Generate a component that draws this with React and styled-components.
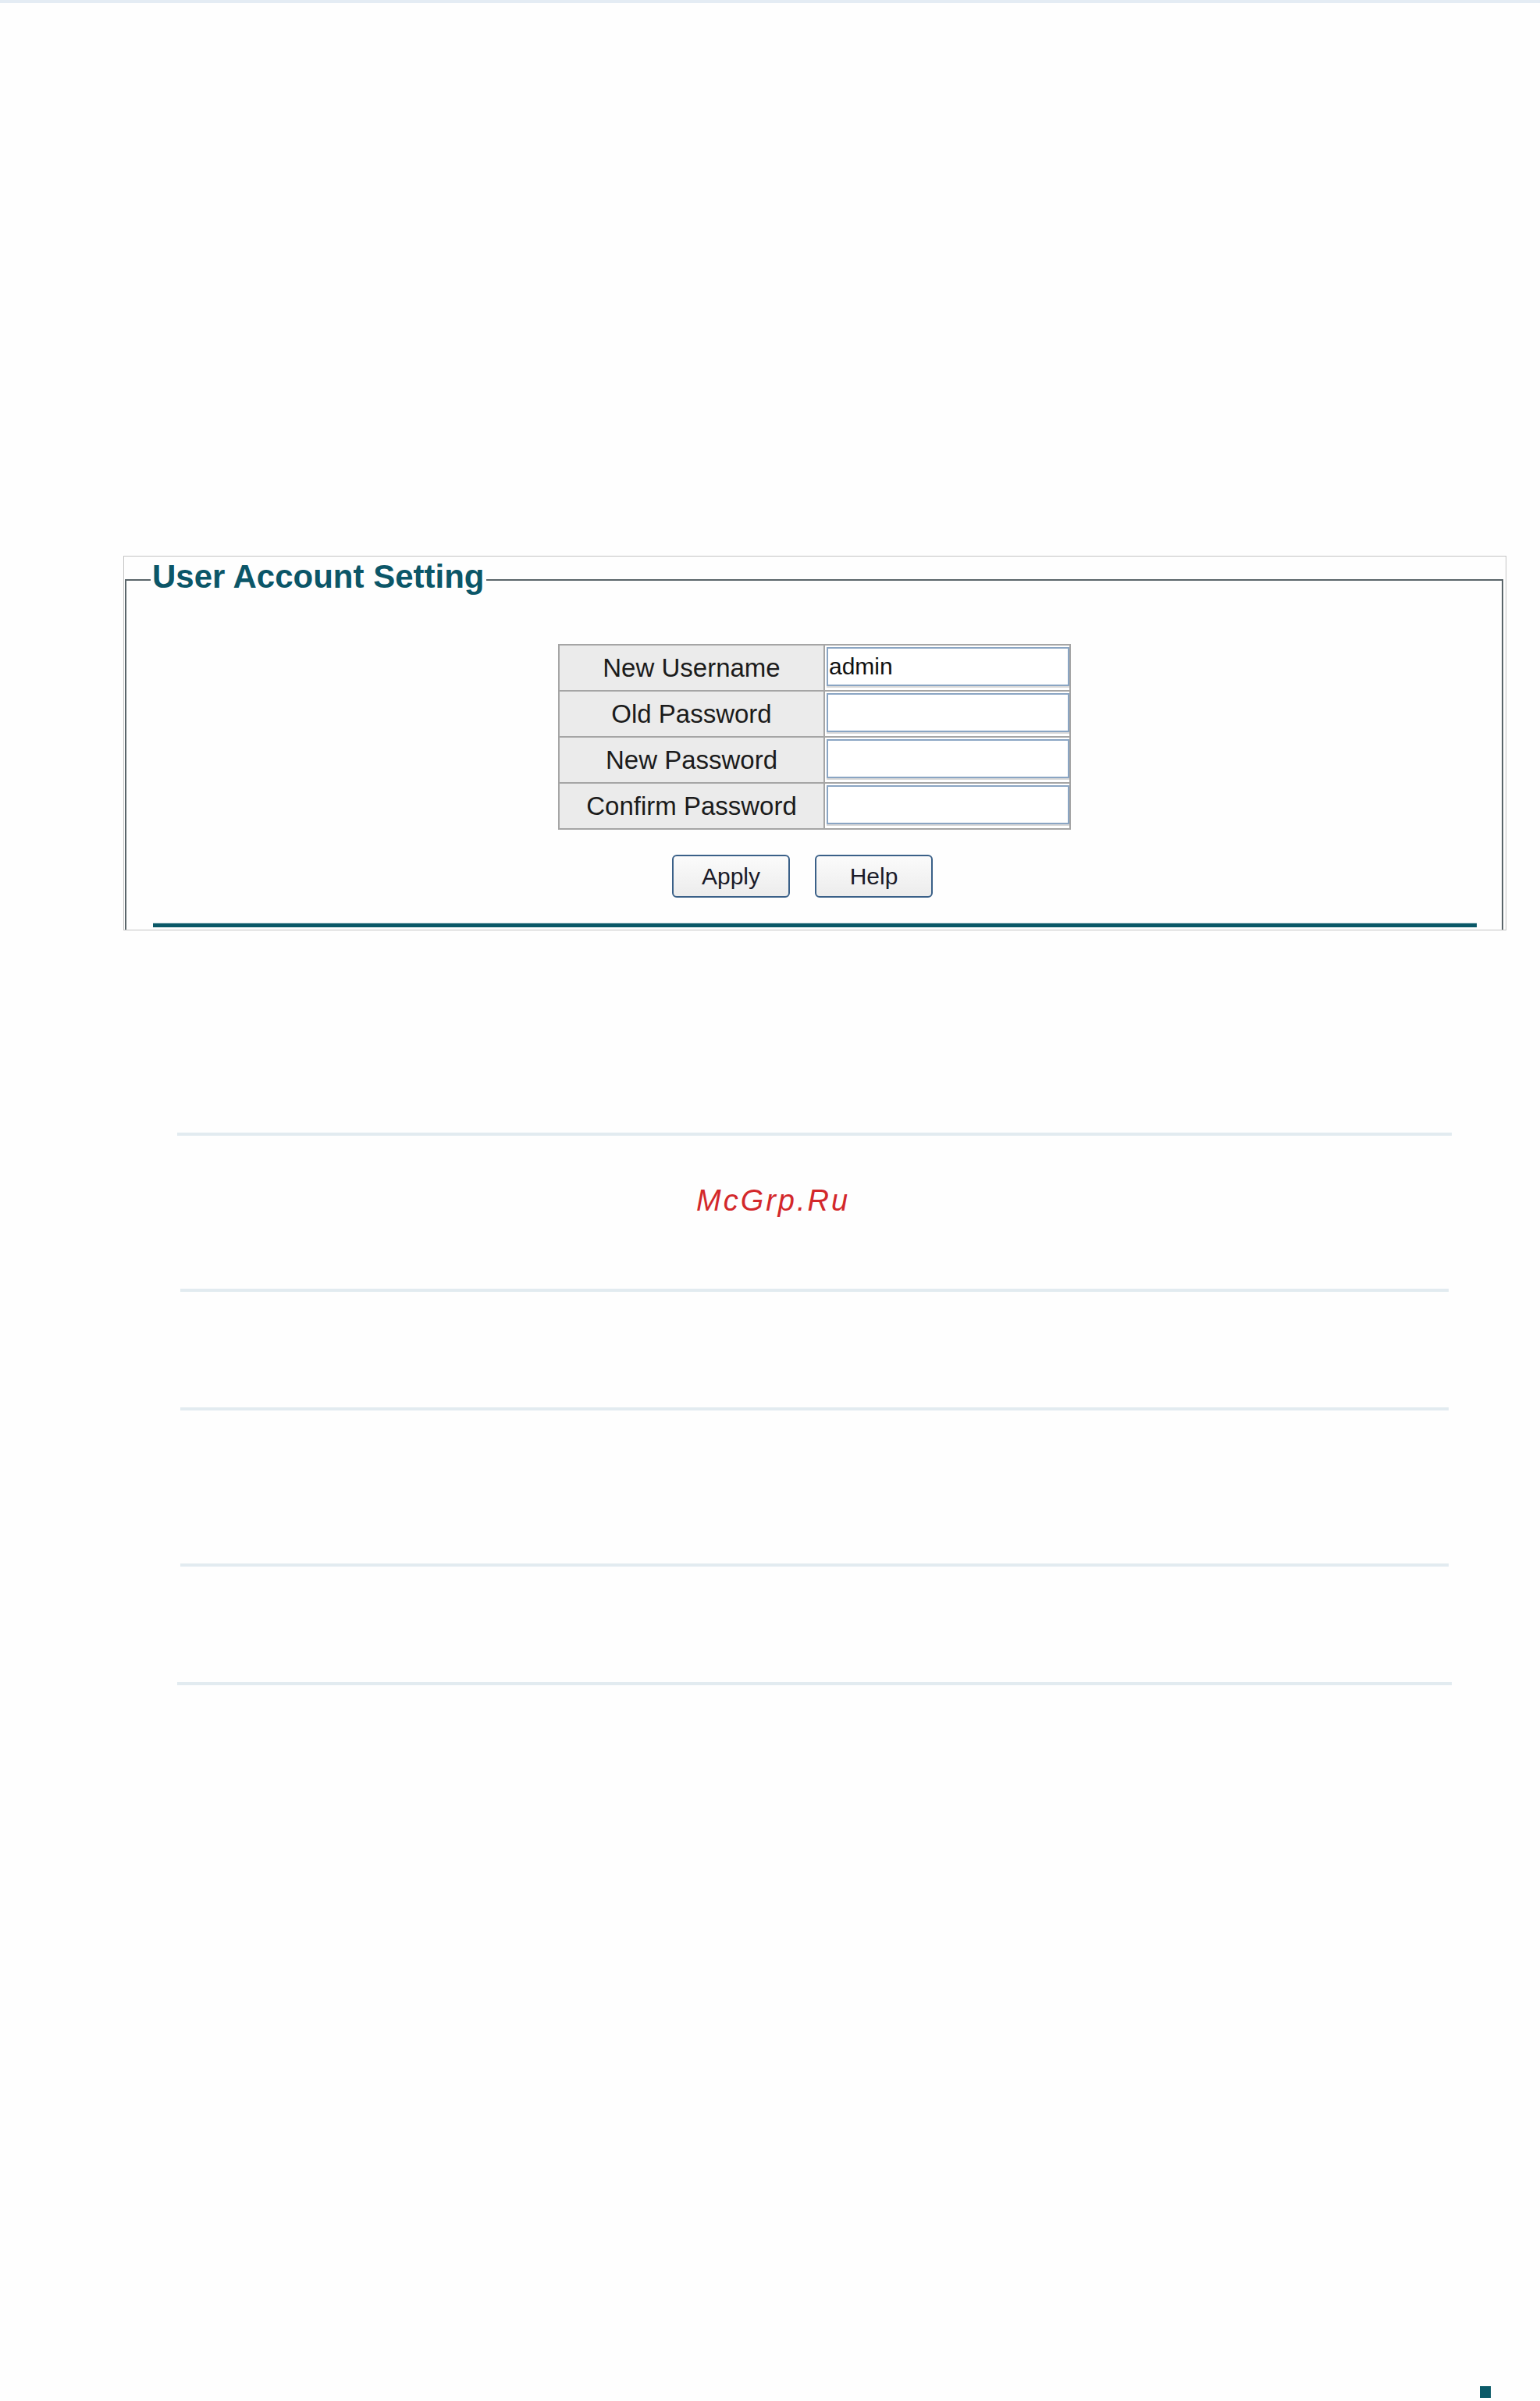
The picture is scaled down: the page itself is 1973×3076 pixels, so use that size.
import React from "react";
import styled, { createGlobalStyle } from "styled-components";

const GlobalStyle = createGlobalStyle`
  html, body {
    margin: 0;
    padding: 0;
    background: #fefefe;
  }
  body {
    font-family: "Liberation Sans", Arial, sans-serif;
  }
  * {
    box-sizing: border-box;
  }
`;

const fields = [
  { label: "New Username", value: "admin", type: "text" },
  { label: "Old Password", value: "", type: "password" },
  { label: "New Password", value: "", type: "password" },
  { label: "Confirm Password", value: "", type: "password" },
];

export default function App() {
  return (
    <>
      <GlobalStyle />
      <Page>
        <TopStrip />
        <Panel>
          <Frame>
            <Legend>User Account Setting</Legend>
            <FormTable>
              {fields.map((f) => (
                <FormRow key={f.label}>
                  <LabelCell>{f.label}</LabelCell>
                  <InputCell>
                    <TextInput type={f.type} defaultValue={f.value} />
                  </InputCell>
                </FormRow>
              ))}
            </FormTable>
            <ButtonRow>
              <Button type="button">Apply</Button>
              <Button type="button">Help</Button>
            </ButtonRow>
            <TealBar />
          </Frame>
        </Panel>

        <Lower>
          <Rule $inset={0} />
          <Watermark>McGrp.Ru</Watermark>
          <Rule $inset={4} />
          <Rule $inset={4} $gap={148} />
          <Rule $inset={4} $gap={196} />
          <Rule $inset={0} $gap={148} />
        </Lower>

        <PageMark />
      </Page>
    </>
  );
}

const Page = styled.div`
  min-height: 3076px;
  display: flex;
  flex-direction: column;
`;

const TopStrip = styled.div`
  height: 4px;
  background: #e4ecf4;
`;

const Panel = styled.div`
  margin: 708px 0 0 158px;
  width: 1772px;
  height: 480px;
  border: 1px solid #c4c4c4;
  overflow: hidden;
`;

const Frame = styled.fieldset`
  margin: 6px 3px 0 1px;
  padding: 0 0 40px 0;
  border: 2px solid #5a656a;
  min-width: 0;
`;

const Legend = styled.legend`
  margin-left: 31px;
  padding: 0 2px 8px 2px;
  font-family: "Liberation Sans", Arial, sans-serif;
  font-weight: bold;
  font-size: 42px;
  line-height: 40px;
  color: #0b5668;
`;

const FormTable = styled.div`
  margin: 58px 0 0 553px;
  width: 657px;
  border-top: 2px solid #a5a5a5;
  border-left: 2px solid #a5a5a5;
`;

const FormRow = styled.div`
  display: grid;
  grid-template-columns: 340px 315px;
  height: 59px;
`;

const LabelCell = styled.div`
  display: flex;
  align-items: center;
  justify-content: center;
  background: #ebebeb;
  border-right: 2px solid #a5a5a5;
  border-bottom: 2px solid #a5a5a5;
  font-family: "Liberation Sans", Arial, sans-serif;
  font-size: 33px;
  color: #1b1b1b;
  white-space: nowrap;
`;

const InputCell = styled.div`
  padding: 2px 0 0 2px;
  background: #fff;
  border-right: 2px solid #a5a5a5;
  border-bottom: 2px solid #a5a5a5;
`;

const TextInput = styled.input`
  display: block;
  width: 100%;
  height: 50px;
  margin: 0;
  padding: 0 0 0 1px;
  border: 2px solid #8aa5c3;
  box-shadow: 0 2px 0 #d8d8d8;
  background: #fff;
  font-family: "Liberation Sans", Arial, sans-serif;
  font-size: 30px;
  color: #111;
  outline: none;
`;

const ButtonRow = styled.div`
  display: flex;
  gap: 32px;
  margin: 32px 0 0 699px;
`;

const Button = styled.button`
  width: 151px;
  height: 55px;
  padding: 0;
  border: 2px solid #3a6088;
  border-radius: 6px;
  background: linear-gradient(#fbfbfb, #ececec);
  font-family: "Liberation Sans", Arial, sans-serif;
  font-size: 30px;
  color: #1a1a28;
  cursor: pointer;
`;

const TealBar = styled.div`
  margin: 32px 32px 0 34px;
  height: 6px;
  border-top: 1px solid #cfe0e4;
  background: #0a5867;
`;

const Lower = styled.div`
  margin: 259px 0 0 227px;
  width: 1633px;
  display: flex;
  flex-direction: column;
`;

const Rule = styled.div`
  height: 4px;
  margin: ${({ $gap }) => $gap || 0}px ${({ $inset }) => $inset}px 0;
  background: #e2ebf0;
`;

const Watermark = styled.div`
  margin: 64px 0 94px 665px;
  font-family: "Liberation Sans", Arial, sans-serif;
  font-style: italic;
  font-size: 38px;
  line-height: 38px;
  letter-spacing: 3px;
  color: #d3282b;
`;

const PageMark = styled.div`
  margin: auto 0 4px 1896px;
  width: 14px;
  height: 15px;
  background: #0b5a68;
`;
